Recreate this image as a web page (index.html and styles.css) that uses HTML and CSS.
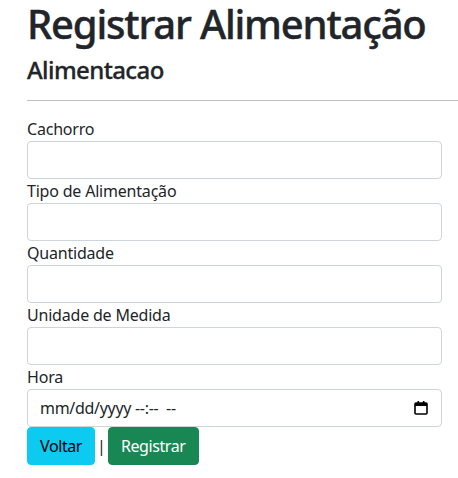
FILE: index.html
```html
<!DOCTYPE html>
<html lang="pt">
<head>
<meta charset="utf-8">
<title>Registrar Alimentação</title>
<link rel="stylesheet" href="styles.css">
</head>
<body>
<main class="page">
  <h1 class="title">Registrar Alimentação</h1>
  <h4 class="subtitle">Alimentacao</h4>
  <hr class="divider">
  <form class="form">
    <div class="field">
      <label class="label" for="cachorro">Cachorro</label>
      <input class="control" id="cachorro" type="text">
    </div>
    <div class="field">
      <label class="label" for="tipo">Tipo de Alimentação</label>
      <input class="control" id="tipo" type="text">
    </div>
    <div class="field">
      <label class="label" for="qtd">Quantidade</label>
      <input class="control" id="qtd" type="text">
    </div>
    <div class="field">
      <label class="label" for="unidade">Unidade de Medida</label>
      <input class="control" id="unidade" type="text">
    </div>
    <div class="field">
      <label class="label" for="hora">Hora</label>
      <div class="date-wrap">
        <input class="control date" id="hora" type="text" placeholder="mm/dd/yyyy --:--  --">
        <svg class="cal" width="14" height="14" viewBox="0 0 14 14" aria-hidden="true">
          <rect x="1" y="2" width="12" height="11" rx="1" fill="none" stroke="#000" stroke-width="1.6"/>
          <rect x="1" y="2" width="12" height="3" fill="#000"/>
          <rect x="3.5" y="0" width="1.6" height="3" fill="#000"/>
          <rect x="8.9" y="0" width="1.6" height="3" fill="#000"/>
        </svg>
      </div>
    </div>
    <div class="actions">
      <a class="btn btn-info" href="#">Voltar</a><span class="sep">|</span><button class="btn btn-success" type="submit">Registrar</button>
    </div>
  </form>
</main>
</body>
</html>
```
FILE: styles.css
```css
* { box-sizing: border-box; }
html, body { margin: 0; padding: 0; }
body {
  font-family: "Noto Sans", "Open Sans", sans-serif;
  font-size: 16px;
  line-height: 1.5;
  color: #212529;
  background: #fff;
}
.page {
  padding-left: 27px;
}
.title {
  margin: 0 0 8px 0;
  font-size: 40px;
  font-weight: 500;
  letter-spacing: -1.2px;
  line-height: 1.2;
  -webkit-text-stroke: 0.4px #212529;
}
.subtitle {
  margin: 0;
  font-size: 24px;
  font-weight: 500;
  letter-spacing: -0.6px;
  line-height: 1.2;
  -webkit-text-stroke: 0.3px #212529;
}
.divider {
  margin: 15px 0 16px 0;
  border: 0;
  border-top: 1px solid rgba(0,0,0,0.25);
  height: 0;
}
.form {
  width: 415px;
}
.field {
  display: flex;
  flex-direction: column;
}
.label {
  display: block;
  line-height: 24px;
  letter-spacing: -0.2px;
}
.control {
  display: block;
  width: 100%;
  height: 38px;
  padding: 6px 12px;
  font-family: inherit;
  font-size: 16px;
  line-height: 1.5;
  color: #212529;
  background: #fff;
  border: 1px solid #ced4da;
  border-radius: 4px;
}
.date-wrap {
  position: relative;
}
.date::placeholder {
  color: #212529;
  opacity: 1;
  letter-spacing: -0.3px;
}
.cal {
  position: absolute;
  right: 14px;
  top: 12px;
}
.actions {
  display: flex;
  align-items: center;
  gap: 2px;
  white-space: nowrap;
}
.sep {
  line-height: 24px;
}
.btn {
  display: inline-block;
  padding: 6px 12px;
  font-family: inherit;
  font-size: 16px;
  line-height: 24px;
  letter-spacing: -0.4px;
  border: 1px solid transparent;
  border-radius: 4px;
  text-decoration: none;
  cursor: pointer;
}
.btn-info {
  background: #0dcaf0;
  border-color: #0dcaf0;
  color: #000;
}
.btn-success {
  background: #198754;
  border-color: #198754;
  color: #fff;
}
```
